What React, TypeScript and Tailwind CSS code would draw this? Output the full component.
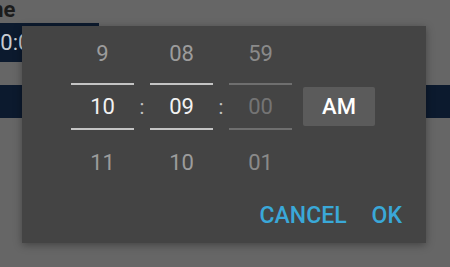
import React from "react";

type Col = { prev: string; value: string; next: string; disabled?: boolean };

const cols: Col[] = [
  { prev: "9", value: "10", next: "11" },
  { prev: "08", value: "09", next: "10" },
  { prev: "59", value: "00", next: "01", disabled: true },
];

function Spinner({ col }: { col: Col }) {
  const line = col.disabled ? "bg-[#6f6f6f]" : "bg-[#c4c4c4]";
  return (
    <div className="flex w-[63px] flex-col">
      <div className={`flex h-[57px] items-center justify-center pb-[2px] ${col.disabled ? "text-[#8a8a8a]" : "text-[#9c9c9c]"}`}>
        {col.prev}
      </div>
      <div className={`h-[2px] ${line}`} />
      <div className={`flex h-[43px] items-center justify-center ${col.disabled ? "text-[#747474]" : "text-[#f2f2f2]"}`}>
        {col.value}
      </div>
      <div className={`h-[2px] ${line}`} />
      <div className={`flex h-[64px] items-center justify-center ${col.disabled ? "text-[#8a8a8a]" : "text-[#9c9c9c]"}`}>
        {col.next}
      </div>
    </div>
  );
}

function Colon() {
  return (
    <div className="mt-[59px] flex h-[43px] w-[16px] items-center justify-center text-[20px] text-[#c4c4c4]">:</div>
  );
}

export default function App() {
  return (
    <div className="relative h-[267px] w-[450px] overflow-hidden bg-[#666666] font-['Roboto',sans-serif]">
      {/* page behind the overlay */}
      <div className="flex flex-col">
        <div className="h-[23px] overflow-hidden">
          <div className="-ml-[35px] text-[22px] font-bold leading-[20px] text-[#1c1c1c]">Time</div>
        </div>
        <div className="flex h-[39px] w-[99px] items-center overflow-hidden bg-[#0c1a2e]">
          <span className="-ml-[12px] whitespace-nowrap text-[22px] text-[#c8ccd2]">10:09:00</span>
        </div>
        <div className="mt-[23px] h-[33px] w-full bg-[#0c1a2e]" />
      </div>

      {/* time picker dialog */}
      <div className="absolute left-[22px] top-[26px] flex h-[217px] w-[404px] flex-col bg-[#444444] shadow-[0_2px_8px_rgba(0,0,0,0.35)]">
        <div className="flex pl-[49px] text-[22px]">
          <Spinner col={cols[0]} />
          <Colon />
          <Spinner col={cols[1]} />
          <Colon />
          <Spinner col={cols[2]} />
          <div className="ml-[11px] mt-[61px] flex h-[39px] w-[72px] items-center justify-center rounded-[2px] bg-[#5b5b5b] text-[22px] font-medium text-white">
            AM
          </div>
        </div>
        <div className="flex h-[45px] items-center justify-end gap-[25px] pr-[24px] text-[23px] font-medium text-[#3aa8d8]">
          <span>CANCEL</span>
          <span>OK</span>
        </div>
      </div>
    </div>
  );
}
